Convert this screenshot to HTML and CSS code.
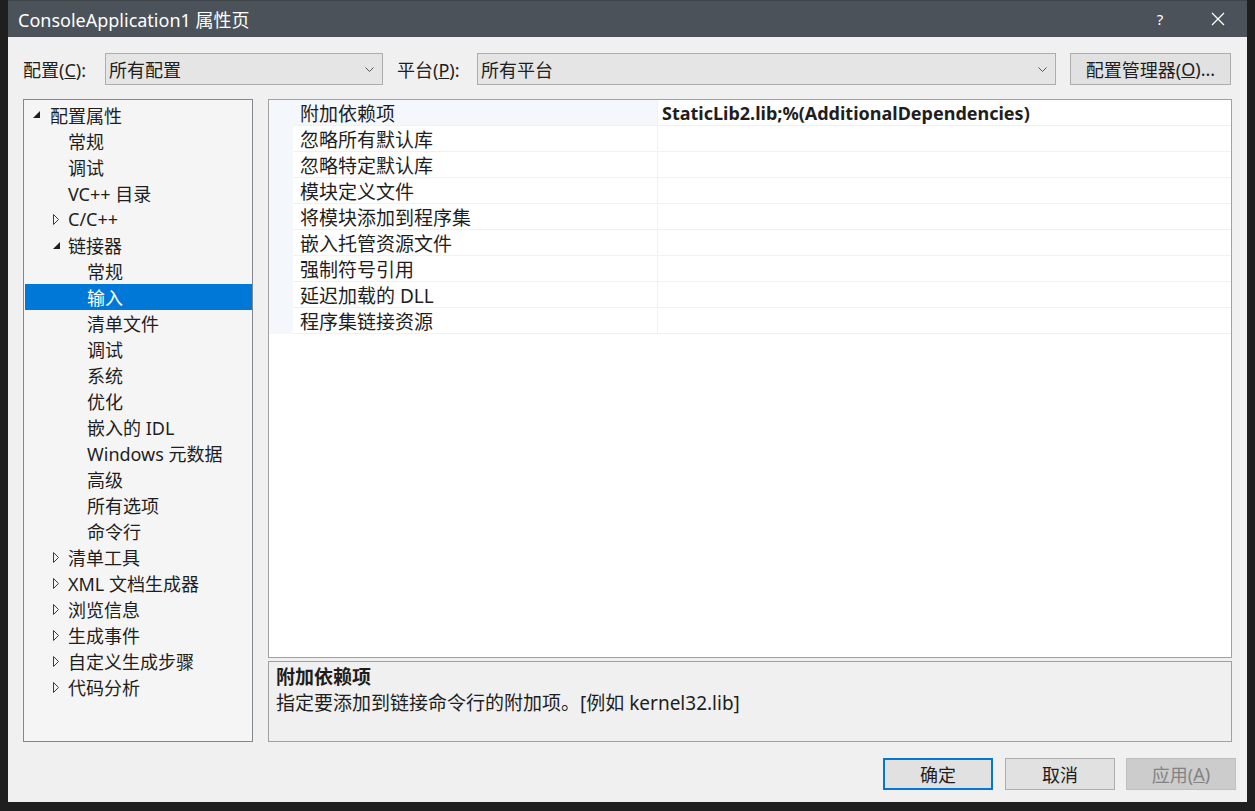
FILE: index.html
```html
<!DOCTYPE html>
<html lang="zh-CN">
<head>
<meta charset="utf-8">
<title>ConsoleApplication1 属性页</title>
<link rel="stylesheet" href="styles.css">
</head>
<body>
<div class="backdrop">
  <div class="dialog">
    <div class="titlebar">
      <span class="title">ConsoleApplication1 属性页</span>
      <span class="tb-btn help">?</span>
      <span class="tb-btn close">
        <svg width="14" height="14" viewBox="0 0 14 14"><path d="M1 1 L13 13 M13 1 L1 13" stroke="#ffffff" stroke-width="1.3" fill="none"/></svg>
      </span>
    </div>

    <div class="toolbar">
      <span class="lbl lbl-config">配置(<u>C</u>):</span>
      <div class="combo combo-config">
        <span>所有配置</span>
        <svg class="chev" width="9" height="5" viewBox="0 0 9 5"><path d="M0.5 0.5 L4.5 4.5 L8.5 0.5" stroke="#555" fill="none"/></svg>
      </div>
      <span class="lbl lbl-platform">平台(<u>P</u>):</span>
      <div class="combo combo-platform">
        <span>所有平台</span>
        <svg class="chev" width="9" height="5" viewBox="0 0 9 5"><path d="M0.5 0.5 L4.5 4.5 L8.5 0.5" stroke="#555" fill="none"/></svg>
      </div>
      <div class="btn mgr">配置管理器(<u>O</u>)...</div>
    </div>

    <div class="main">
      <div class="tree">
        <div class="node l0"><span class="tw"><svg width="7" height="7" viewBox="0 0 7 7"><path d="M7 0 L7 7 L0 7 Z" fill="#1e1e1e"/></svg></span>配置属性</div>
        <div class="node l1">常规</div>
        <div class="node l1">调试</div>
        <div class="node l1">VC++ 目录</div>
        <div class="node l1e"><span class="tw"><svg width="6" height="11" viewBox="0 0 6 11"><path d="M0.5 0.5 L5.5 5.5 L0.5 10.5 Z" fill="none" stroke="#3c3c3c"/></svg></span>C/C++</div>
        <div class="node l1e"><span class="tw"><svg width="7" height="7" viewBox="0 0 7 7"><path d="M7 0 L7 7 L0 7 Z" fill="#1e1e1e"/></svg></span>链接器</div>
        <div class="node l2">常规</div>
        <div class="node l2 sel">输入</div>
        <div class="node l2">清单文件</div>
        <div class="node l2">调试</div>
        <div class="node l2">系统</div>
        <div class="node l2">优化</div>
        <div class="node l2">嵌入的 IDL</div>
        <div class="node l2">Windows 元数据</div>
        <div class="node l2">高级</div>
        <div class="node l2">所有选项</div>
        <div class="node l2">命令行</div>
        <div class="node l1e"><span class="tw"><svg width="6" height="11" viewBox="0 0 6 11"><path d="M0.5 0.5 L5.5 5.5 L0.5 10.5 Z" fill="none" stroke="#3c3c3c"/></svg></span>清单工具</div>
        <div class="node l1e"><span class="tw"><svg width="6" height="11" viewBox="0 0 6 11"><path d="M0.5 0.5 L5.5 5.5 L0.5 10.5 Z" fill="none" stroke="#3c3c3c"/></svg></span>XML 文档生成器</div>
        <div class="node l1e"><span class="tw"><svg width="6" height="11" viewBox="0 0 6 11"><path d="M0.5 0.5 L5.5 5.5 L0.5 10.5 Z" fill="none" stroke="#3c3c3c"/></svg></span>浏览信息</div>
        <div class="node l1e"><span class="tw"><svg width="6" height="11" viewBox="0 0 6 11"><path d="M0.5 0.5 L5.5 5.5 L0.5 10.5 Z" fill="none" stroke="#3c3c3c"/></svg></span>生成事件</div>
        <div class="node l1e"><span class="tw"><svg width="6" height="11" viewBox="0 0 6 11"><path d="M0.5 0.5 L5.5 5.5 L0.5 10.5 Z" fill="none" stroke="#3c3c3c"/></svg></span>自定义生成步骤</div>
        <div class="node l1e"><span class="tw"><svg width="6" height="11" viewBox="0 0 6 11"><path d="M0.5 0.5 L5.5 5.5 L0.5 10.5 Z" fill="none" stroke="#3c3c3c"/></svg></span>代码分析</div>
      </div>

      <div class="right">
        <div class="grid">
          <div class="gutter"></div>
          <div class="rows">
            <div class="prow selrow"><div class="pname">附加依赖项</div><div class="pval">StaticLib2.lib;%(AdditionalDependencies)</div></div>
            <div class="prow"><div class="pname">忽略所有默认库</div><div class="pval"></div></div>
            <div class="prow"><div class="pname">忽略特定默认库</div><div class="pval"></div></div>
            <div class="prow"><div class="pname">模块定义文件</div><div class="pval"></div></div>
            <div class="prow"><div class="pname">将模块添加到程序集</div><div class="pval"></div></div>
            <div class="prow"><div class="pname">嵌入托管资源文件</div><div class="pval"></div></div>
            <div class="prow"><div class="pname">强制符号引用</div><div class="pval"></div></div>
            <div class="prow"><div class="pname">延迟加载的 DLL</div><div class="pval"></div></div>
            <div class="prow"><div class="pname">程序集链接资源</div><div class="pval"></div></div>
          </div>
        </div>
        <div class="desc">
          <div class="desc-title">附加依赖项</div>
          <div class="desc-text">指定要添加到链接命令行的附加项。[例如 kernel32.lib]</div>
        </div>
      </div>
    </div>

    <div class="footer">
      <div class="btn fbtn primary">确定</div>
      <div class="btn fbtn">取消</div>
      <div class="btn fbtn disabled">应用(<u>A</u>)</div>
    </div>
  </div>
</div>
</body>
</html>
```
FILE: styles.css
```css
html, body {
  margin: 0;
  padding: 0;
}
body {
  background: #1f1f1f;
  width: 1255px;
  height: 811px;
  overflow: hidden;
  font-family: "Noto Sans", "Noto Sans CJK SC", sans-serif;
  color: #1e1e1e;
}
.backdrop {
  padding-left: 8px;
  display: flex;
}
.dialog {
  width: 1239px;
  height: 802px;
  background: #f0f0f0;
  display: flex;
  flex-direction: column;
  box-sizing: border-box;
}
.titlebar {
  height: 37px;
  background: #4b5259;
  color: #ffffff;
  display: flex;
  align-items: center;
  padding-left: 10px;
  font-size: 18px;
  border-top: 1px solid #3f4449;
  box-sizing: border-box;
}
.title {
  flex: 1;
  white-space: nowrap;
}
.tb-btn {
  display: flex;
  align-items: center;
  justify-content: center;
  color: #ffffff;
}
.help {
  font-size: 15px;
  width: 20px;
  margin-right: 38px;
}
.close {
  width: 20px;
  margin-right: 19px;
}
.toolbar {
  margin-top: 16px;
  height: 32px;
  display: flex;
  align-items: center;
  padding-left: 15px;
  font-size: 18px;
}
.lbl {
  white-space: nowrap;
}
.lbl-config {
  width: 82px;
}
.lbl-platform {
  width: 80px;
  margin-left: 14px;
}
.combo {
  height: 32px;
  box-sizing: border-box;
  border: 1px solid #adadad;
  background: #e5e5e5;
  display: flex;
  align-items: center;
  padding-left: 3px;
  padding-right: 8px;
}
.combo span {
  flex: 1;
}
.combo-config {
  width: 278px;
}
.combo-platform {
  width: 579px;
}
.btn {
  height: 32px;
  box-sizing: border-box;
  border: 1px solid #adadad;
  background: #e1e1e1;
  display: flex;
  align-items: center;
  justify-content: center;
  font-size: 18px;
  white-space: nowrap;
}
.mgr {
  width: 161px;
  margin-left: 14px;
}
.main {
  margin-top: 14px;
  height: 643px;
  display: flex;
  padding-left: 15px;
}
.tree {
  width: 230px;
  box-sizing: border-box;
  border: 1px solid #828790;
  background: #f5f5f5;
  padding-top: 2px;
  font-size: 18px;
}
.node {
  height: 26px;
  display: flex;
  align-items: center;
  white-space: nowrap;
}
.tw {
  width: 14px;
  display: flex;
  justify-content: center;
  align-items: center;
}
.l0 {
  padding-left: 5px;
}
.l0 .tw {
  margin-right: 7px;
  margin-top: -2px;
}
.l1 {
  padding-left: 44px;
}
.l1e {
  padding-left: 25px;
}
.l1e .tw {
  margin-right: 5px;
}
.l2 {
  padding-left: 63px;
}
.sel {
  background: #0078d7;
  color: #ffffff;
  margin: 0 0 0 1px;
  padding-left: 62px;
}
.right {
  width: 964px;
  margin-left: 15px;
  display: flex;
  flex-direction: column;
}
.grid {
  height: 559px;
  box-sizing: border-box;
  border: 1px solid #a0a0a0;
  background: #ffffff;
  display: flex;
  align-items: flex-start;
  font-size: 19px;
}
.gutter {
  width: 24px;
  height: 234px;
  background: #f4f7fc;
}
.rows {
  flex: 1;
}
.prow {
  height: 26px;
  display: flex;
  box-sizing: border-box;
  border-bottom: 1px solid #eef1f7;
}
.pname {
  width: 365px;
  box-sizing: border-box;
  padding-left: 7px;
  border-right: 1px solid #eef1f7;
  display: flex;
  align-items: center;
  white-space: nowrap;
}
.selrow .pname {
  background: #f4f7fc;
}
.pval {
  flex: 1;
  padding-left: 4px;
  display: flex;
  align-items: center;
  font-weight: bold;
  font-size: 18px;
  white-space: nowrap;
}
.desc {
  margin-top: 3px;
  height: 81px;
  box-sizing: border-box;
  border: 1px solid #a0a0a0;
  background: #f0f0f0;
  padding: 2px 7px;
  font-size: 19px;
}
.desc-title {
  height: 26px;
  line-height: 26px;
  font-weight: bold;
}
.desc-text {
  height: 26px;
  line-height: 26px;
}
.footer {
  margin-top: 16px;
  display: flex;
  justify-content: flex-end;
  padding-right: 11px;
  gap: 11px;
}
.fbtn {
  width: 110px;
  font-size: 18px;
}
.primary {
  border: 2px solid #0078d7;
  margin-right: 1px;
}
.disabled {
  background: #cccccc;
  border-color: #bfbfbf;
  color: #838383;
}
```
